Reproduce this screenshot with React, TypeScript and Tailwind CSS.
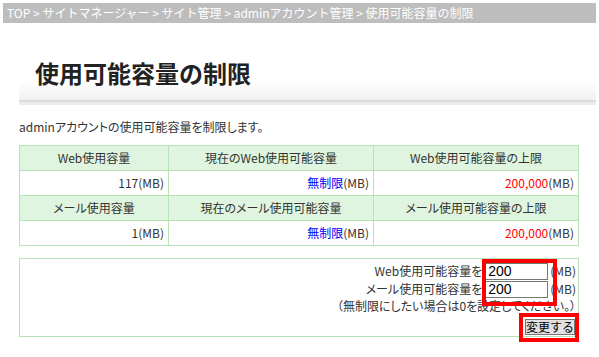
const FONT = "font-['MS_UI_Gothic','Noto_Sans_CJK_JP',sans-serif]";

const rows = [
  {
    heads: ['Web使用容量', '現在のWeb使用可能容量', 'Web使用可能容量の上限'],
    used: '117',
  },
  {
    heads: ['メール使用容量', '現在のメール使用可能容量', 'メール使用可能容量の上限'],
    used: '1',
  },
];

export default function App() {
  return (
    <div className={`relative w-[599px] h-[357px] bg-white text-[12px] text-[#333] ${FONT} [font-feature-settings:'palt']`}>
      {/* breadcrumb */}
      <div className="mx-[3px] mt-[3px] h-[20px] bg-[#bdbdbd] pl-[4px] leading-[20px] text-white [font-feature-settings:normal]">
        TOP &gt; サイトマネージャー &gt; サイト管理 &gt; adminアカウント管理 &gt; 使用可能容量の制限
      </div>

      {/* title */}
      <div className="ml-[19px] mr-[3px]">
        <div className="h-[77px] bg-gradient-to-b from-white from-[75%] to-[#f1f1f1] pl-[16px] pt-[36px]">
          <h1 className="text-[24px] font-bold leading-[28px] text-[#222] [font-feature-settings:normal]">使用可能容量の制限</h1>
        </div>
        <div className="h-[2px] bg-[#dcdcdc]" />
        <div className="h-[3px] bg-[#ececec]" />
      </div>

      <div className="mx-[19px] w-[560px]">
        <p className="mt-[15px] leading-[14px]">adminアカウントの使用可能容量を制限します。</p>

        <table className="mt-[11px] w-[560px] border-collapse border border-[#b7e4b7]">
          <colgroup>
            <col className="w-[149px]" />
            <col className="w-[205px]" />
            <col className="w-[205px]" />
          </colgroup>
          <tbody>
            {rows.map((r) => (
              <>
                <tr key={r.heads[0]} className="h-[25px] bg-[#dff5df]">
                  {r.heads.map((h) => (
                    <th key={h} className="border border-[#b7e4b7] px-[4px] text-center font-normal">
                      {h}
                    </th>
                  ))}
                </tr>
                <tr key={r.used} className="h-[25px]">
                  <td className="border border-[#b7e4b7] px-[4px] text-right">{r.used}(MB)</td>
                  <td className="border border-[#b7e4b7] px-[4px] text-right">
                    <span className="text-[#0000ff]">無制限</span>(MB)
                  </td>
                  <td className="border border-[#b7e4b7] px-[4px] text-right">
                    <span className="text-[#ff0000]">200,000</span>(MB)
                  </td>
                </tr>
              </>
            ))}
          </tbody>
        </table>

        {/* form */}
        <div className="mt-[12px] h-[79px] border border-[#b7e4b7] pr-[2px] pt-[3px] text-right">
          <div className="flex h-[18px] items-center justify-end">
            <span>Web使用可能容量を</span>
            <input
              readOnly
              value="200"
              className="ml-[3px] mr-[2px] h-[17px] w-[63px] border border-[#767676] px-[2px] font-['Liberation_Sans',sans-serif] text-[14px] text-black outline-none"
            />
            <span>(MB)</span>
          </div>
          <div className="flex h-[18px] items-center justify-end">
            <span>メール使用可能容量を</span>
            <input
              readOnly
              value="200"
              className="ml-[3px] mr-[2px] h-[17px] w-[63px] border border-[#767676] px-[2px] font-['Liberation_Sans',sans-serif] text-[14px] text-black outline-none"
            />
            <span>(MB)</span>
          </div>
          <div className="mt-[1px] leading-[14px]">（無制限にしたい場合は0を設定してください。）</div>
          <div className="mt-[6px] flex justify-end pr-[1px]">
            <button className="h-[16px] whitespace-nowrap border border-[#777] bg-[#e1e1e1] px-0 text-[12px] leading-[14px] text-black [font-feature-settings:normal]">
              変更する
            </button>
          </div>
        </div>
      </div>

      {/* annotation boxes */}
      <div className="absolute left-[482px] top-[256px] h-[47px] w-[75px] border-[4px] border-[#ff0000]" />
      <div className="absolute left-[519px] top-[310px] h-[29px] w-[60px] border-[4px] border-[#ff0000]" />
    </div>
  );
}
